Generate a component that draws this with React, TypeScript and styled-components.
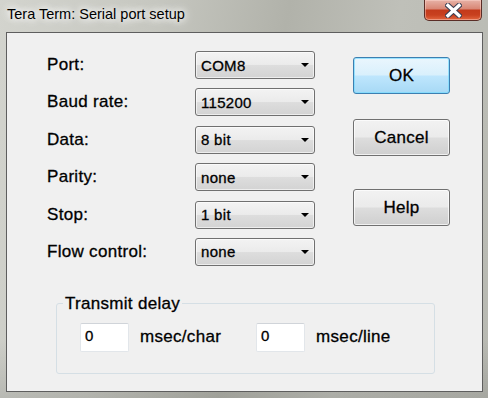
import React from "react";
import styled, { createGlobalStyle } from "styled-components";

const GlobalStyle = createGlobalStyle`
  * { box-sizing: border-box; }
  body {
    margin: 0;
    font-family: "Liberation Sans", Arial, sans-serif;
  }
`;

const Window = styled.div`
  width: 488px;
  height: 398px;
  display: flex;
  flex-direction: column;
  overflow: hidden;
  background:
    linear-gradient(to bottom, rgba(255, 255, 255, 0) 85%, rgba(0, 0, 0, 0.1)),
    linear-gradient(100deg, #d3d4ce 0%, #c6c7c0 28%, #b1b2aa 52%, #bfc0b9 72%, #b8b9b2 100%);
`;

const TitleBar = styled.div`
  height: 32px;
  display: flex;
  justify-content: space-between;
  align-items: flex-start;
`;

const Title = styled.span`
  padding: 5px 0 0 7px;
  font-family: "Liberation Sans", Arial, sans-serif;
  font-size: 14.5px;
  line-height: 18px;
  color: #000;
  text-shadow: 0 0 6px #fff, 0 0 10px #fff, 0 0 14px rgba(255, 255, 255, 0.8);
`;

const CloseButton = styled.div`
  width: 58px;
  height: 21px;
  margin-right: 6px;
  display: flex;
  align-items: center;
  justify-content: center;
  border: 1px solid #5a2d26;
  border-top: none;
  border-radius: 0 0 5px 5px;
  background: linear-gradient(
    to bottom,
    #e7b2a6 0%,
    #d88674 45%,
    #c33a1b 50%,
    #c8401f 75%,
    #e2663f 100%
  );
  box-shadow: inset 0 0 0 1px rgba(255, 220, 210, 0.45);
`;

const Client = styled.div`
  height: 360px;
  margin: 0 5px 0 6px;
  border: 1px solid #5e5e5e;
  background: #f0f0f0;
  padding: 18px 0 0 40px;
  display: flex;
  flex-direction: column;
  -webkit-text-stroke: 0.3px #000;
`;

const TopSection = styled.div`
  display: flex;
  align-items: flex-start;
`;

const Form = styled.div`
  display: grid;
  grid-template-columns: 148px 120px;
  grid-auto-rows: 28px;
  row-gap: 9.4px;
  align-items: center;
`;

const Label = styled.span`
  font-size: 17px;
  letter-spacing: 0.3px;
  color: #000;
`;

const Combo = styled.div`
  height: 28px;
  display: flex;
  align-items: center;
  justify-content: space-between;
  padding: 0 5px 0 5px;
  border: 1px solid #707070;
  border-radius: 3px;
  background: linear-gradient(to bottom, #f3f3f3 0%, #ebebeb 48%, #dddddd 52%, #d3d3d3 100%);
  box-shadow: inset 0 0 0 1px rgba(255, 255, 255, 0.6);
  font-size: 15px;
  letter-spacing: 0.3px;
  color: #000;
`;

const ButtonColumn = styled.div`
  margin-left: 38px;
  display: flex;
  flex-direction: column;
`;

const Button = styled.div<{ $primary?: boolean; $top: number }>`
  width: 97px;
  height: 37px;
  margin-top: ${(p) => p.$top}px;
  display: flex;
  align-items: center;
  justify-content: center;
  border: 1px solid ${(p) => (p.$primary ? "#3c7fb1" : "#707070")};
  border-radius: 3px;
  background: ${(p) =>
    p.$primary
      ? "linear-gradient(to bottom, #eaf6fd 0%, #d9f0fc 48%, #bee6fd 52%, #a7d9f5 100%)"
      : "linear-gradient(to bottom, #f2f2f2 0%, #ebebeb 48%, #dddddd 52%, #cfcfcf 100%)"};
  box-shadow: inset 0 0 0 1px ${(p) => (p.$primary ? "rgba(120, 220, 255, 0.7)" : "rgba(255, 255, 255, 0.7)")};
  font-size: 17px;
  letter-spacing: 0.3px;
  color: #000;
`;

const Group = styled.fieldset`
  width: 379px;
  height: 80px;
  margin: 28px 0 0 9px;
  padding: 9px 0 0 6px;
  border: 1px solid #d5dfe5;
  border-radius: 3px;
  min-width: 0;
`;

const Legend = styled.legend`
  padding: 0 2px;
  font-size: 17px;
  line-height: 20px;
  letter-spacing: 0.3px;
  color: #000;
`;

const DelayRow = styled.div`
  margin-left: 17px;
  display: flex;
  align-items: center;
`;

const NumberBox = styled.div`
  width: 49px;
  height: 29px;
  padding: 3px 0 0 4px;
  background: #fff;
  border: 1px solid #e2e6ea;
  border-top-color: #d0d4d9;
  border-radius: 2px;
  font-size: 15px;
  line-height: 18px;
  color: #000;
`;

const Unit = styled.span<{ $gap: number }>`
  margin: 0 ${(p) => p.$gap}px 0 11px;
  font-size: 17px;
  letter-spacing: 0.3px;
  color: #000;
`;

const Arrow = () => (
  <svg width="8" height="4" viewBox="0 0 8 4">
    <path d="M0 0 H8 L4 4 Z" fill="#000" />
  </svg>
);

const CloseGlyph = () => (
  <svg width="17" height="15" viewBox="0 0 17 15">
    <path d="M3 2.5 L14 12.5 M14 2.5 L3 12.5" stroke="#3b3f52" strokeWidth="5.5" strokeLinecap="square" />
    <path d="M3 2.5 L14 12.5 M14 2.5 L3 12.5" stroke="#ffffff" strokeWidth="3.4" strokeLinecap="square" />
  </svg>
);

const settings = [
  { label: "Port:", value: "COM8" },
  { label: "Baud rate:", value: "115200" },
  { label: "Data:", value: "8 bit" },
  { label: "Parity:", value: "none" },
  { label: "Stop:", value: "1 bit" },
  { label: "Flow control:", value: "none" },
];

export default function App() {
  return (
    <>
      <GlobalStyle />
      <Window>
        <TitleBar>
          <Title>Tera Term: Serial port setup</Title>
          <CloseButton>
            <CloseGlyph />
          </CloseButton>
        </TitleBar>
        <Client>
          <TopSection>
            <Form>
              {settings.map((s) => (
                <React.Fragment key={s.label}>
                  <Label>{s.label}</Label>
                  <Combo>
                    <span>{s.value}</span>
                    <Arrow />
                  </Combo>
                </React.Fragment>
              ))}
            </Form>
            <ButtonColumn>
              <Button $primary $top={6}>OK</Button>
              <Button $top={25}>Cancel</Button>
              <Button $top={33}>Help</Button>
            </ButtonColumn>
          </TopSection>
          <Group>
            <Legend>Transmit delay</Legend>
            <DelayRow>
              <NumberBox>0</NumberBox>
              <Unit $gap={35}>msec/char</Unit>
              <NumberBox>0</NumberBox>
              <Unit $gap={0}>msec/line</Unit>
            </DelayRow>
          </Group>
        </Client>
      </Window>
    </>
  );
}
